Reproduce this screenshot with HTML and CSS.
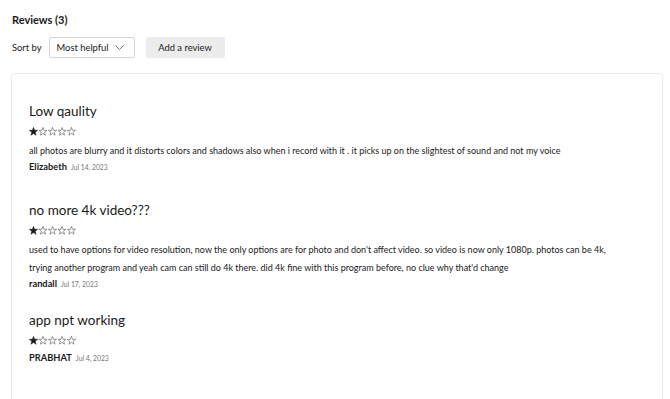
FILE: index.html
```html
<!DOCTYPE html>
<html lang="en">
<head>
    <meta charset="UTF-8">
    <title>Reviews</title>
    <link rel="stylesheet" href="styles.css">
</head>
<body>
    <!-- star shape, reused by every rating -->
    <svg width="0" height="0" class="defs">
        <symbol id="star" viewBox="0 0 9 9">
            <path d="M4.5 0.4 L5.53 3.28 L8.6 3.34 L6.16 5.24 L7.05 8.2 L4.5 6.45 L1.95 8.2 L2.84 5.24 L0.4 3.34 L3.47 3.28 Z"/>
        </symbol>
    </svg>

    <div class="reviews">
        <h2 class="reviews-title">Reviews (3)</h2>

        <!-- Sort + add -->
        <div class="toolbar">
            <span class="sort-label">Sort by</span>
            <div class="select">
                <span>Most helpful</span>
                <svg class="chevron" width="9" height="5" viewBox="0 0 9 5"><path d="M0.5 0.5 L4.5 4.5 L8.5 0.5" fill="none" stroke="#555" stroke-width="0.8"/></svg>
            </div>
            <button class="add-btn">Add a review</button>
        </div>

        <div class="card">
            <div class="review">
                <h3 class="review-title">Low qaulity</h3>
                <svg class="stars" width="48" height="9" viewBox="0 0 48 9">
                    <use href="#star" x="0" width="9" height="9" class="full"/>
                    <use href="#star" x="9.5" width="9" height="9"/>
                    <use href="#star" x="19" width="9" height="9"/>
                    <use href="#star" x="28.5" width="9" height="9"/>
                    <use href="#star" x="38" width="9" height="9"/>
                </svg>
                <p class="review-text">all photos are blurry and it distorts colors and shadows also when i record with it . it picks up on the slightest of sound and not my voice</p>
                <div class="meta"><span class="author">Elizabeth</span><span class="date">Jul 14, 2023</span></div>
            </div>
            <div class="review">
                <h3 class="review-title">no more 4k video???</h3>
                <svg class="stars" width="48" height="9" viewBox="0 0 48 9">
                    <use href="#star" x="0" width="9" height="9" class="full"/>
                    <use href="#star" x="9.5" width="9" height="9"/>
                    <use href="#star" x="19" width="9" height="9"/>
                    <use href="#star" x="28.5" width="9" height="9"/>
                    <use href="#star" x="38" width="9" height="9"/>
                </svg>
                <p class="review-text">used to have options for video resolution, now the only options are for photo and don't affect video. so video is now only 1080p. photos can be 4k, trying another program and yeah cam can still do 4k there. did 4k fine with this program before, no clue why that'd change</p>
                <div class="meta"><span class="author">randall</span><span class="date">Jul 17, 2023</span></div>
            </div>
            <div class="review">
                <h3 class="review-title">app npt working</h3>
                <svg class="stars" width="48" height="9" viewBox="0 0 48 9">
                    <use href="#star" x="0" width="9" height="9" class="full"/>
                    <use href="#star" x="9.5" width="9" height="9"/>
                    <use href="#star" x="19" width="9" height="9"/>
                    <use href="#star" x="28.5" width="9" height="9"/>
                    <use href="#star" x="38" width="9" height="9"/>
                </svg>
                <div class="meta"><span class="author">PRABHAT</span><span class="date">Jul 4, 2023</span></div>
            </div>
        </div>
    </div>
</body>
</html>
```

FILE: styles.css
```css
*, *::before, *::after {
    box-sizing: border-box;
}

body {
    margin: 0;
    font-family: 'Lato', 'Open Sans', sans-serif;
    color: #1a1a1a;
    background: #fff;
    overflow: hidden;
}

.defs {
    position: absolute;
}

.reviews {
    padding: 12px 8px 0 11px;
}

.reviews-title {
    font-size: 11px;
    font-weight: 700;
    margin: 0 0 9px 1px;
    line-height: 16px;
}

.toolbar {
    display: flex;
    align-items: center;
    height: 21px;
    margin-bottom: 15px;
    font-size: 9.4px;
}

.sort-label {
    margin: 0 7px 0 1px;
}

.select {
    width: 86px;
    height: 21px;
    flex-shrink: 0;
    white-space: nowrap;
    border: 1px solid #d6d6d6;
    border-radius: 2px;
    display: flex;
    align-items: center;
    justify-content: space-between;
    padding: 0 10px 0 7px;
}

.chevron {
    display: block;
}

.add-btn {
    margin-left: 11px;
    width: 79px;
    height: 21px;
    border: none;
    border-radius: 2px;
    background: #ececec;
    font-family: inherit;
    font-size: 9.4px;
    color: #1a1a1a;
    padding: 0;
}

.card {
    width: 652px;
    min-height: 340px;
    border: 1px solid #ececec;
    border-radius: 4px;
    box-shadow: 0 1px 3px rgba(0, 0, 0, 0.05);
    padding: 28px 17px 0 17px;
}

.review {
    margin-bottom: 20px;
}

.review:first-child {
    margin-bottom: 27px;
}

.review-title {
    font-size: 13.5px;
    font-weight: 400;
    line-height: 18px;
    margin: 0;
}

.stars {
    display: block;
    margin: 7px 0 6px 0;
    fill: none;
    stroke: #555;
    stroke-width: 0.6;
}

.stars .full {
    fill: #1a1a1a;
    stroke: #1a1a1a;
}

.review-text {
    width: 592px;
    font-size: 9px;
    line-height: 18px;
    margin: 0;
}

.meta {
    font-size: 9.3px;
    line-height: 14px;
}

.author {
    font-weight: 700;
    margin-right: 4px;
}

.date {
    font-size: 6.8px;
    color: #777;
}
```
